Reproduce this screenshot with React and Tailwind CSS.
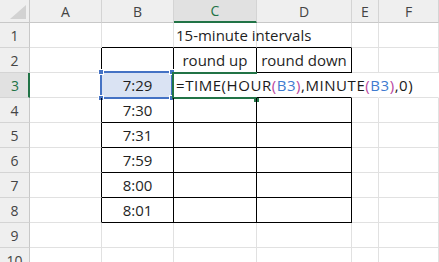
import React from "react";

// column letters + widths (right border included)
const COLS = [
  { k: "A", w: "w-[72px]" },
  { k: "B", w: "w-[72px]" },
  { k: "C", w: "w-[83px]" },
  { k: "D", w: "w-[95px]" },
  { k: "E", w: "w-[27px]" },
  { k: "F", w: "flex-1" },
];

const TIMES = { 3: "7:29", 4: "7:30", 5: "7:31", 6: "7:59", 7: "8:00", 8: "8:01" };

const FONT = "font-['Open_Sans','Noto_Sans_CJK_JP',sans-serif]";

function Formula() {
  const pink = "text-[#b9459f]";
  const blue = "text-[#3f7bd0]";
  return (
    <span className="text-[#1a1a1a] tracking-[0.55px]">
      =TIME(HOUR<span className={pink}>(</span>
      <span className={blue}>B3</span>
      <span className={pink}>)</span>,MINUTE<span className={pink}>(</span>
      <span className={blue}>B3</span>
      <span className={pink}>)</span>,0)
    </span>
  );
}

function Cell({ r, c }) {
  const inBox = r >= 2 && r <= 8;
  const colIdx = COLS.findIndex((x) => x.k === c.k);
  // right edge black for A..D inside the boxed rows
  let right = inBox && colIdx <= 3 ? "border-r-black" : "border-r-[#e1e1e1]";
  const bottom = r >= 1 && r <= 8 && colIdx >= 1 && colIdx <= 3 ? "border-b-black" : "border-b-[#e1e1e1]";
  // editing row: formula spills over C..F
  if (r === 3 && colIdx >= 2) right = "border-r-transparent";

  const base = `${c.w} h-[25px] shrink-0 border-r border-b ${right} ${bottom} relative flex items-center text-[15px] leading-none`;

  if (r === 3 && c.k === "B") {
    return (
      <div className={`${base} justify-center bg-[#dae3f3]`}>
        <span>7:29</span>
        <div className="absolute left-[-2px] top-[-2px] w-[73px] h-[28px] border-2 border-[#4472c4]" />
        <div className="absolute left-[-4px] top-[-4px] w-[6px] h-[6px] bg-[#4472c4] border border-white" />
        <div className="absolute left-[67px] top-[-4px] w-[6px] h-[6px] bg-[#4472c4] border border-white" />
        <div className="absolute left-[-4px] top-[22px] w-[6px] h-[6px] bg-[#4472c4] border border-white" />
        <div className="absolute left-[67px] top-[22px] w-[6px] h-[6px] bg-[#4472c4] border border-white" />
      </div>
    );
  }
  if (r === 3 && c.k === "C") {
    return (
      <div className={`${base} pl-[2px] whitespace-nowrap overflow-visible`}>
        <div className="absolute left-[-2px] top-[-1px] w-[85px] h-[27px] border-t-2 border-l-2 border-b-2 border-[#217346]" />
        <span className="relative">
          <Formula />
        </span>
        <div className="absolute left-[80px] top-[24px] w-[5px] h-[5px] bg-[#217346]" />
      </div>
    );
  }
  if (c.k === "B" && TIMES[r]) {
    return (
      <div className={`${base} justify-center`}>
        <span>{TIMES[r]}</span>
      </div>
    );
  }
  if (r === 1 && c.k === "C") {
    return (
      <div className={`${base} pl-[2px] whitespace-nowrap`}>
        <span>15-minute intervals</span>
      </div>
    );
  }
  if (r === 2 && c.k === "C") {
    return (
      <div className={`${base} justify-center`}>
        <span>round up</span>
      </div>
    );
  }
  if (r === 2 && c.k === "D") {
    return (
      <div className={`${base} justify-center`}>
        <span>round down</span>
      </div>
    );
  }
  return <div className={base} />;
}

export default function App() {
  const rows = [1, 2, 3, 4, 5, 6, 7, 8, 9, 10];
  return (
    <div className={`w-[439px] h-[262px] overflow-hidden bg-white text-[#1f1f1f] ${FONT}`}>
      {/* column header strip */}
      <div className="flex h-[23px] bg-[#efefef] text-[14px] text-[#444]">
        <div className="w-[30px] shrink-0 border-r border-b border-r-[#c8c8c8] border-b-[#c8c8c8] flex items-end justify-end pr-[3px] pb-[3px]">
          <svg width="16" height="14" viewBox="0 0 16 14">
            <path d="M16 0 L16 14 L0 14 Z" fill="#d2d2d2" />
          </svg>
        </div>
        {COLS.map((c) =>
          c.k === "C" ? (
            <div
              key={c.k}
              className={`${c.w} shrink-0 bg-[#e1e1e1] border-r border-r-[#d4d4d4] border-b-2 border-b-[#217346] flex items-center justify-center text-[#217346]`}
            >
              {c.k}
            </div>
          ) : (
            <div
              key={c.k}
              className={`${c.w} shrink-0 border-r border-b border-r-[#d4d4d4] border-b-[#c8c8c8] flex items-center justify-center`}
            >
              {c.k}
            </div>
          )
        )}
      </div>

      {rows.map((r) => (
        <div key={r} className="flex">
          {r === 3 ? (
            <div className="w-[30px] h-[25px] shrink-0 bg-[#e1e1e1] border-r-2 border-b border-r-[#217346] border-b-[#d4d4d4] flex items-center justify-center pl-[2px] text-[14px] text-[#217346]">
              {r}
            </div>
          ) : (
            <div className="w-[30px] h-[25px] shrink-0 bg-[#efefef] border-r border-b border-r-[#c8c8c8] border-b-[#d4d4d4] flex items-center justify-center text-[14px] text-[#444]">
              {r}
            </div>
          )}
          {COLS.map((c) => (
            <Cell key={c.k} r={r} c={c} />
          ))}
        </div>
      ))}
    </div>
  );
}
